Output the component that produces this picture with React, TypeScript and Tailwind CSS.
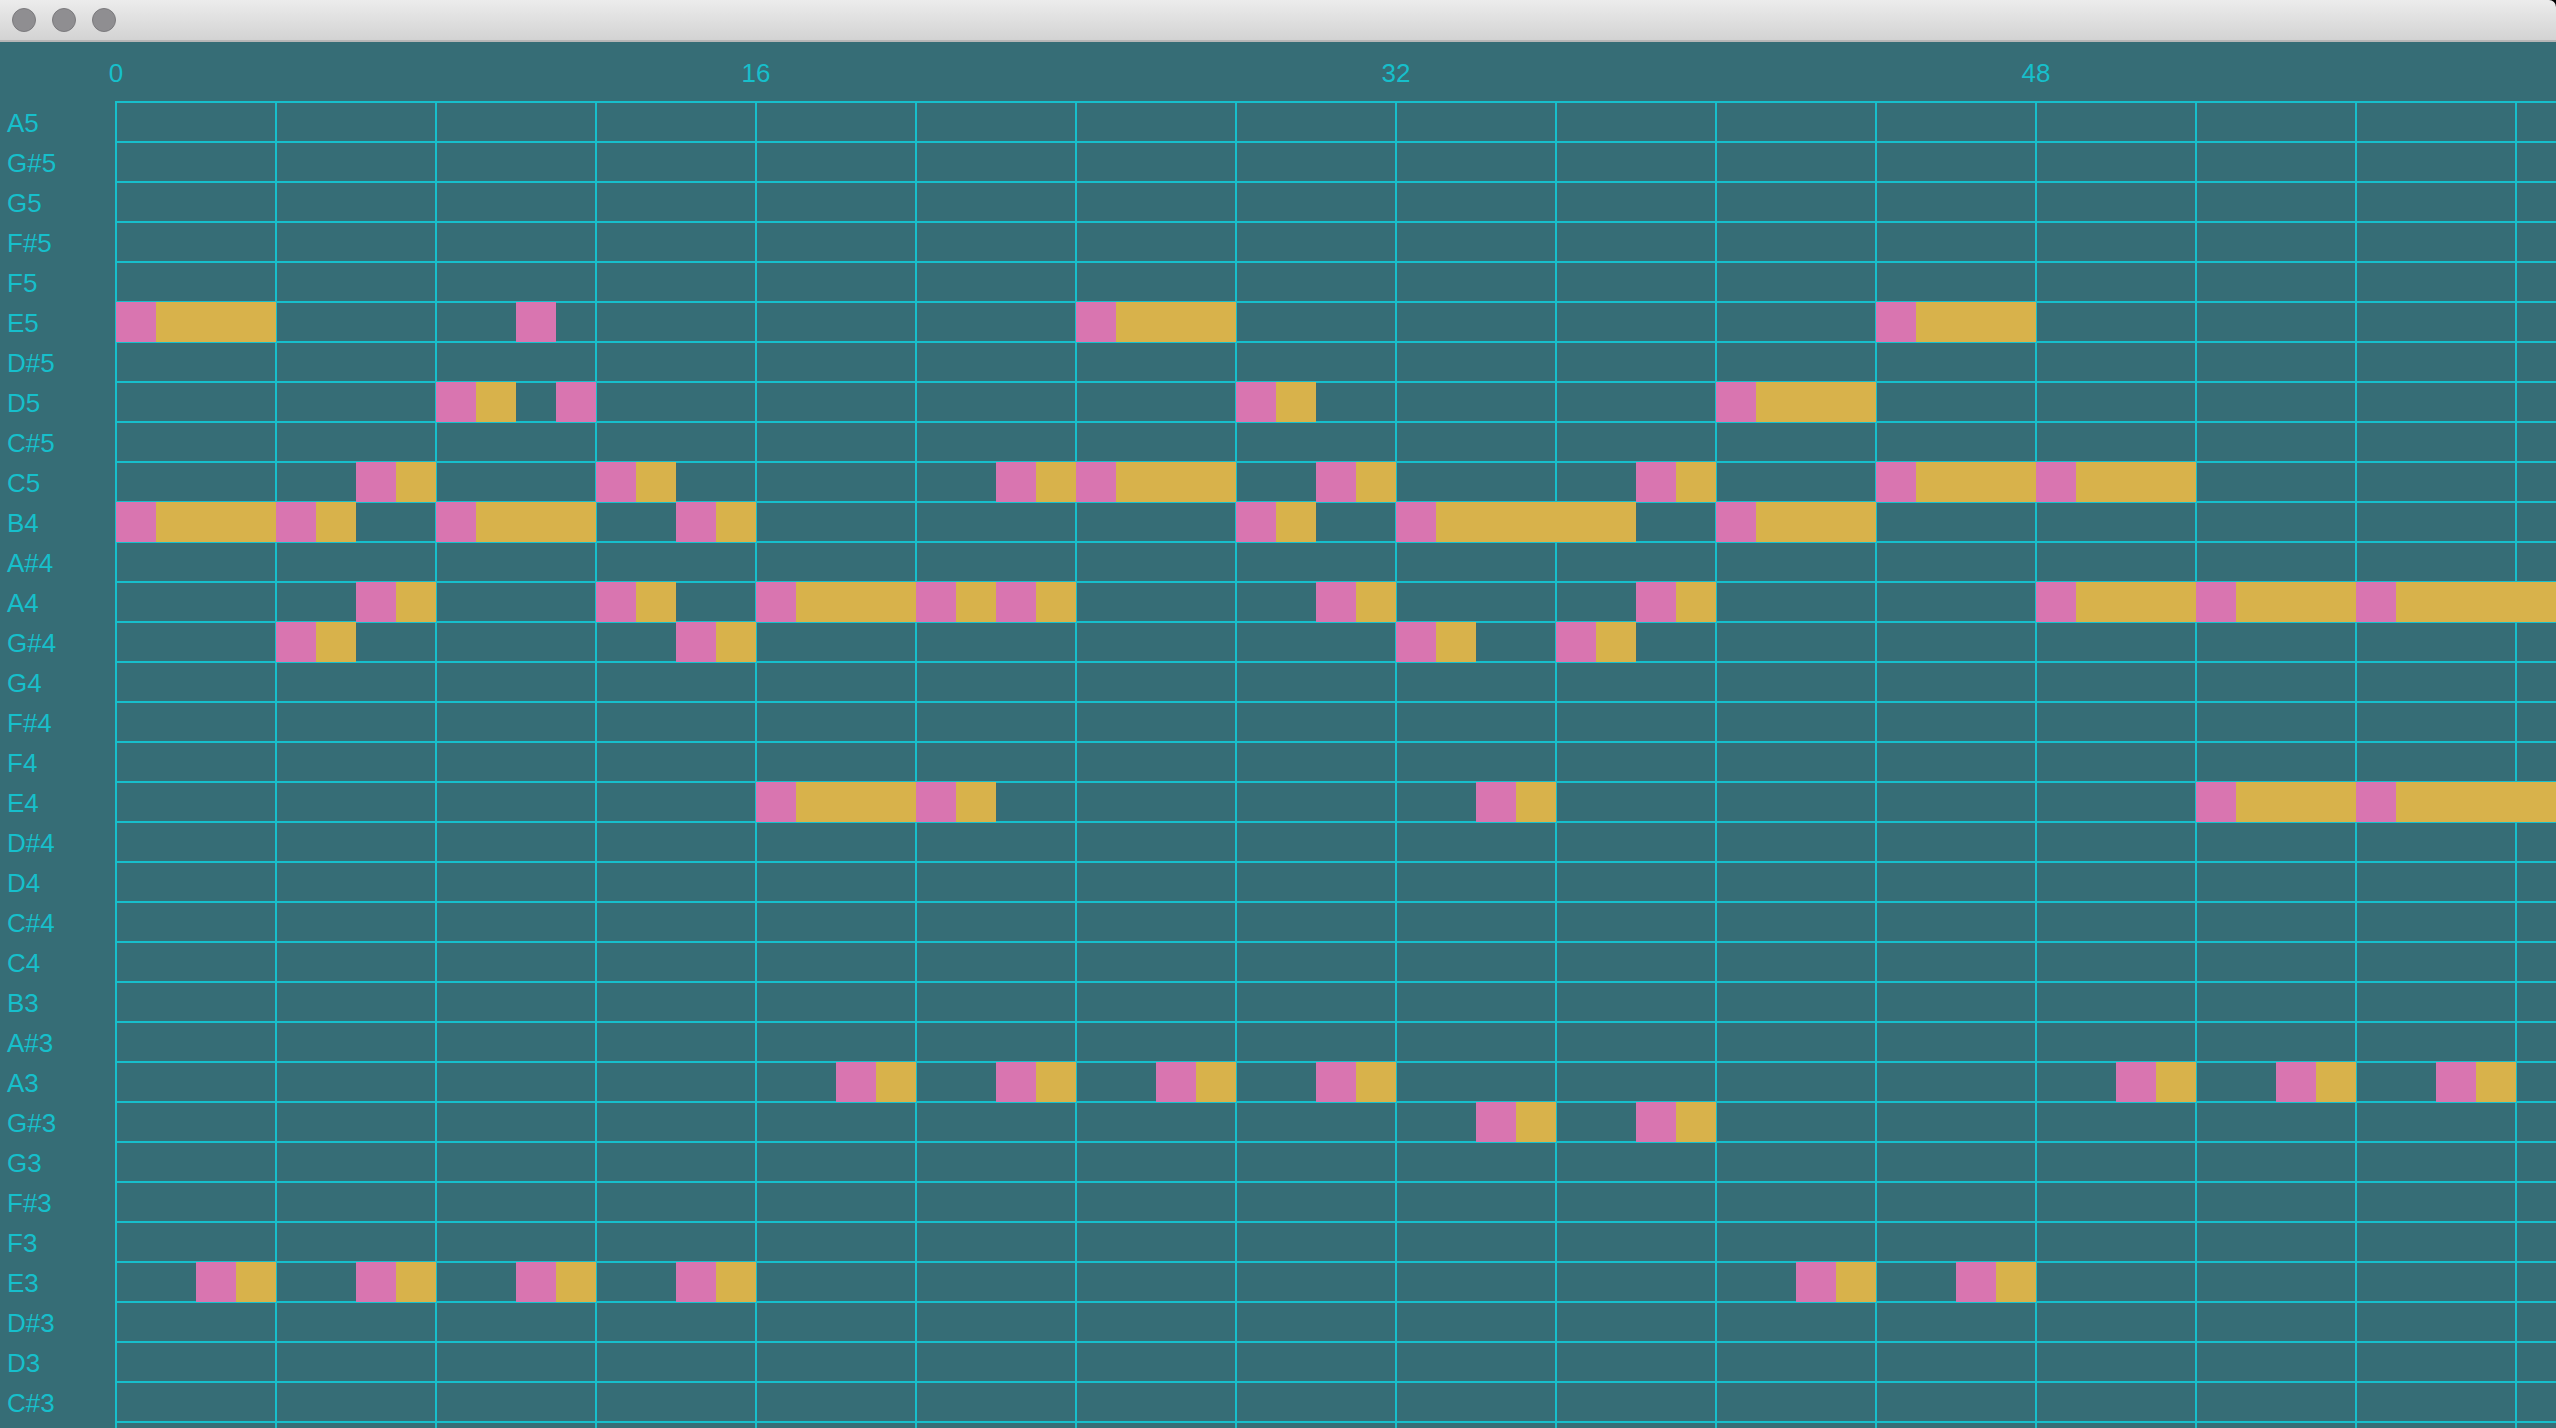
const NOTE_NAMES = [
  "A5", "G#5", "G5", "F#5", "F5", "E5", "D#5", "D5", "C#5", "C5", "B4",
  "A#4", "A4", "G#4", "G4", "F#4", "F4", "E4", "D#4", "D4", "C#4", "C4",
  "B3", "A#3", "A3", "G#3", "G3", "F#3", "F3", "E3", "D#3", "D3", "C#3",
]

// [row, step, length]
const NOTES: [number, number, number][] = [
  // E5
  [5, 0, 4], [5, 10, 1], [5, 24, 4], [5, 44, 4],
  // D5
  [7, 8, 2], [7, 11, 1], [7, 28, 2], [7, 40, 4],
  // C5
  [9, 6, 2], [9, 12, 2], [9, 22, 2], [9, 24, 4], [9, 30, 2], [9, 38, 2], [9, 44, 4], [9, 48, 4],
  // B4
  [10, 0, 4], [10, 4, 2], [10, 8, 4], [10, 14, 2], [10, 28, 2], [10, 32, 6], [10, 40, 4],
  // A4
  [12, 6, 2], [12, 12, 2], [12, 16, 4], [12, 20, 2], [12, 22, 2], [12, 30, 2], [12, 38, 2],
  [12, 48, 4], [12, 52, 4], [12, 56, 8],
  // G#4
  [13, 4, 2], [13, 14, 2], [13, 32, 2], [13, 36, 2],
  // E4
  [17, 16, 4], [17, 20, 2], [17, 34, 2], [17, 52, 4], [17, 56, 8],
  // A3
  [24, 18, 2], [24, 22, 2], [24, 26, 2], [24, 30, 2], [24, 50, 2], [24, 54, 2], [24, 58, 2],
  // G#3
  [25, 34, 2], [25, 38, 2],
  // E3
  [29, 2, 2], [29, 6, 2], [29, 10, 2], [29, 14, 2], [29, 42, 2], [29, 46, 2],
]

const CELL = 40
const BAR_MARKS = [0, 16, 32, 48]

function TrafficLights() {
  return (
    <div className="flex items-center gap-4 pl-3">
      {[0, 1, 2].map((i) => (
        <div key={i} className="w-6 h-6 rounded-full bg-[#8f8e91] border border-[#7b7a7d]" />
      ))}
    </div>
  )
}

function Note({ row, step, len }: { row: number; step: number; len: number }) {
  return (
    <div
      className="absolute flex"
      style={{ left: 116 + step * CELL, top: 1 + row * CELL, width: len * CELL, height: CELL }}
    >
      <div className="w-[40px] h-full shrink-0 bg-[#d975b0]" />
      {len > 1 && <div className="flex-1 h-full bg-[#d8b24b]" />}
    </div>
  )
}

export default function App() {
  return (
    <div className="w-[2556px] h-[1428px] bg-black overflow-hidden flex flex-col font-['Liberation_Sans',sans-serif]">
      {/* Title bar */}
      <div className="h-[42px] shrink-0 flex items-center rounded-tr-[7px] border-b-2 border-[#b6b6b6] bg-gradient-to-b from-[#ececec] to-[#d3d3d3]">
        <TrafficLights />
      </div>

      {/* Piano roll */}
      <div className="flex-1 min-h-0 overflow-hidden bg-[#366d76] text-[#17bfcb] text-[26px]">
        {/* Step ruler */}
        <div className="h-[59px] flex gap-[600px] pl-[96px] pt-[18px] leading-[26px]">
          {BAR_MARKS.map((n) => (
            <div key={n} className="w-[40px] shrink-0 text-center">
              {n}
            </div>
          ))}
        </div>

        {/* Rows */}
        <div className="relative">
          {NOTE_NAMES.map((name) => (
            <div key={name} className="flex h-[40px]">
              <div className="w-[115px] shrink-0 pl-[7px] pt-[2px] leading-[40px] whitespace-nowrap">
                {name}
              </div>
              <div className="flex-1 border-t-2 border-[#17bfcb] bg-[repeating-linear-gradient(to_right,#17bfcb_0px,#17bfcb_2px,transparent_2px,transparent_160px)]" />
            </div>
          ))}
          {/* last line below C#3, the next row is cut off by the window */}
          <div className="flex h-[40px]">
            <div className="w-[115px] shrink-0" />
            <div className="flex-1 border-t-2 border-[#17bfcb] bg-[repeating-linear-gradient(to_right,#17bfcb_0px,#17bfcb_2px,transparent_2px,transparent_160px)]" />
          </div>

          {/* Notes */}
          <div className="absolute inset-0 pointer-events-none">
            {NOTES.map(([row, step, len], i) => (
              <Note key={i} row={row} step={step} len={len} />
            ))}
          </div>
        </div>
      </div>
    </div>
  )
}
